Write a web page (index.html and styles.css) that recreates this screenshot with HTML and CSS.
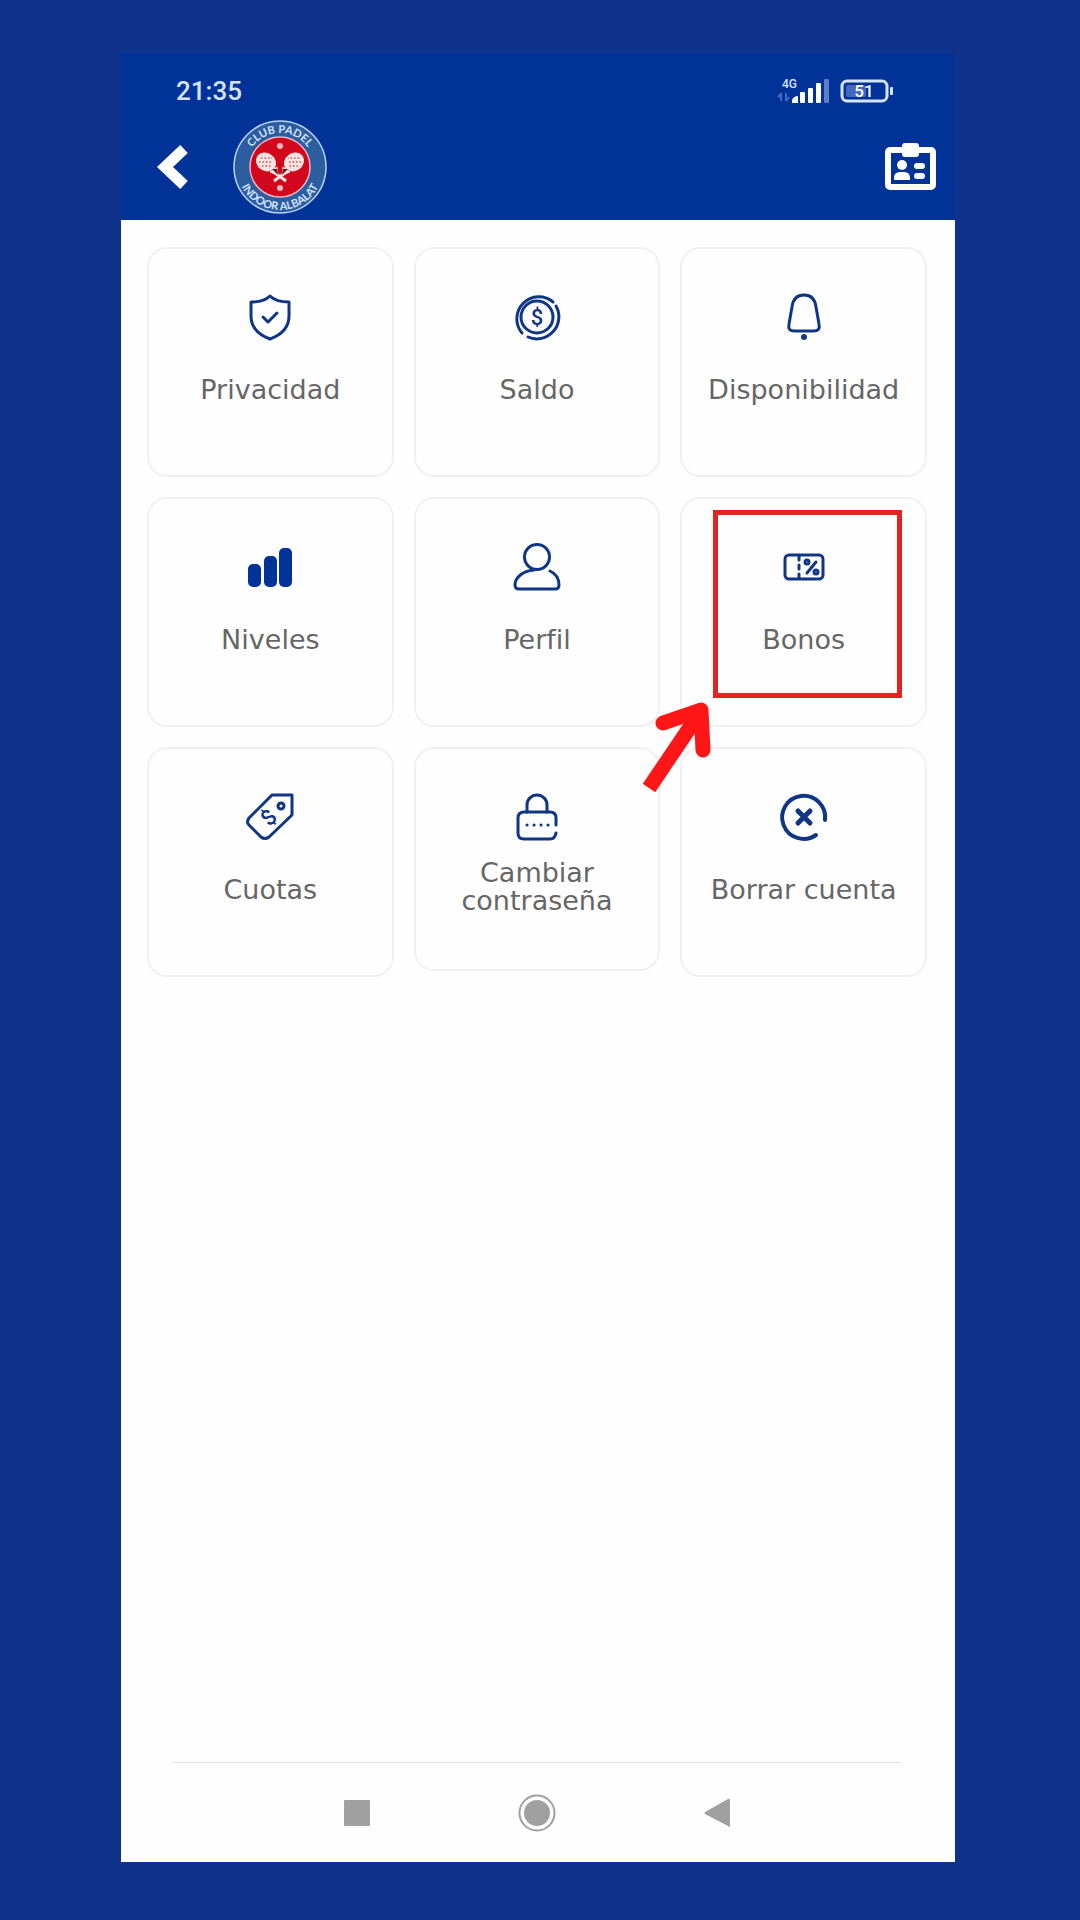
FILE: index.html
```html
<!DOCTYPE html>
<html lang="es">
<head>
<meta charset="utf-8">
<meta name="viewport" content="width=device-width, initial-scale=1">
<title>Club Padel Indoor Albalat</title>
<link rel="stylesheet" href="styles.css">
</head>

<body>
<div class="phone">
    <header class="header">
        <div class="status">
            <span class="time">21:35</span>
            <svg class="signal" width="54" height="28" viewBox="0 0 54 28">
                <text x="6" y="11" class="net">4G</text>
                <path d="M5 16v8M2 20l3-3M10 24v-8M10 24l3-4" fill="none" stroke="#4468bd" stroke-width="2"/>
                <path d="M16 26v-3q2-4 6-4v7z" fill="#fff"/>
                <rect x="24" y="15" width="5" height="11" rx="1" fill="#fff"/>
                <rect x="32" y="11" width="5" height="15" rx="1" fill="#fff"/>
                <rect x="40" y="6" width="5" height="20" rx="1" fill="#fff"/>
                <rect x="48" y="2" width="5" height="24" rx="1" fill="#5b7dcb"/>
            </svg>
            <svg class="battery" width="54" height="24" viewBox="0 0 54 24">
                <rect x="2" y="2" width="45" height="20" rx="5" fill="none" stroke="#d5e4ff" stroke-width="3"/>
                <rect x="6" y="6" width="20" height="12" rx="2" fill="#4468bd"/>
                <rect x="50" y="8" width="3" height="8" rx="1" fill="#d5e4ff"/>
                <text x="24" y="18" text-anchor="middle" class="charge">51</text>
            </svg>
        </div>
        <div class="bar">
            <a href="#" class="back" aria-label="Volver">
                <svg width="32" height="46" viewBox="0 0 32 46"><path d="M27 5L8 23l19 18" fill="none" stroke="#fff" stroke-width="11"/></svg>
            </a>
            <svg class="logo" width="94" height="94" viewBox="0 0 94 94">
                <defs>
                    <path id="arcTop" d="M13 47a34 34 0 0 1 68 0"/>
                    <path id="arcBottom" d="M4 47a43 43 0 0 0 86 0"/>
                </defs>
                <circle cx="47" cy="47" r="46" fill="#2b5d9f" stroke="#b9d3f5" stroke-width="1.5"/>
                <circle cx="47" cy="47" r="30" fill="#d2061c" stroke="#f0b4c4" stroke-width="1.5"/>
                <text class="logo-text"><textPath href="#arcTop" startOffset="50%" text-anchor="middle">CLUB PADEL</textPath></text>
                <text class="logo-text"><textPath href="#arcBottom" startOffset="50%" text-anchor="middle">INDOOR ALBALAT</textPath></text>
                <g id="racket" stroke="#fbe3e0" fill="none">
                    <path d="M42 53l11 8" stroke-width="3"/>
                    <ellipse cx="33" cy="42" rx="10" ry="8.5" transform="rotate(35 33 42)" fill="#fbe3e0"/>
                    <path d="M37 52l7 3 0-8z" fill="#fbe3e0"/>
                    <path d="M28 38h11M26 42h14M29 46h10" stroke="#c9505a" stroke-width="1.5" stroke-dasharray="1.5 2"/>
                    <path d="M39 49l6 6-1-6z" fill="#5b2420" stroke="none"/>
                </g>
                <use href="#racket" transform="matrix(-1 0 0 1 94 0)"/>
                <circle cx="47" cy="26" r="3" fill="#fbb8b8"/>
                <circle cx="47" cy="68" r="3" fill="#fbb8b8"/>
            </svg>
            <a href="#" class="card-id" aria-label="Carnet">
                <svg width="52" height="48" viewBox="0 0 52 48">
                    <rect x="4" y="7" width="45" height="37" rx="2" fill="none" stroke="#fff" stroke-width="6"/>
                    <rect x="18" y="0" width="17" height="14" rx="3" fill="#fff"/>
                    <circle cx="18" cy="22" r="5" fill="#fff"/>
                    <path d="M10 37v-2q0-6 6-6h4q6 0 6 6v2z" fill="#fff"/>
                    <rect x="30" y="20" width="11" height="6" rx="3" fill="#fff"/>
                    <rect x="30" y="30" width="11" height="6" rx="3" fill="#fff"/>
                </svg>
            </a>
        </div>
    </header>

    <main class="tiles">
        <a href="#" class="tile">
            <svg class="icon" viewBox="0 0 46 46"><path d="M23 2q-6 6-19 6v14q0 16 19 23q19-7 19-23V8q-13 0-19-6z"/><path d="M16 23l5 5 9-9"/></svg>
            <span class="label">Privacidad</span>
        </a>
        <a href="#" class="tile">
            <svg class="icon" viewBox="0 0 46 46">
                <circle cx="23" cy="23" r="16"/>
                <path d="M39 8A22 22 0 0 0 8 39"/><path d="M42 12A22 22 0 0 1 14 43"/>
                <text x="23" y="31" text-anchor="middle" class="money">$</text>
            </svg>
            <span class="label">Saldo</span>
        </a>
        <a href="#" class="tile">
            <svg class="icon" viewBox="0 0 46 46"><path d="M23 1c-7 0-11 4-12 12L8 30c-1 5 1 7 5 7h20c4 0 6-2 5-7l-3-17c-1-8-5-12-12-12z"/><circle cx="23" cy="43" r="3" class="solid"/></svg>
            <span class="label">Disponibilidad</span>
        </a>
        <a href="#" class="tile">
            <svg class="icon level" viewBox="0 0 46 46"><rect x="1" y="20" width="13" height="23" rx="5"/><rect x="17" y="12" width="13" height="31" rx="5"/><rect x="32" y="4" width="13" height="39" rx="5"/></svg>
            <span class="label">Niveles</span>
        </a>
        <a href="#" class="tile">
            <svg class="icon" viewBox="0 0 46 46"><circle cx="23" cy="13" r="12.500"/><path d="M20 26C8 27 1 34 1 41q0 4 4 4h36q4 0 4-4 0-10-9-14"/></svg>
            <span class="label">Perfil</span>
        </a>
        <a href="#" class="tile">
            <svg class="icon" viewBox="0 0 46 46"><rect x="4" y="11" width="38" height="24" rx="4"/><path d="M18 12v4M18 21v4M18 30v4M26 29l9-11"/><circle cx="26" cy="18" r="2"/><circle cx="35" cy="28" r="2"/></svg>
            <span class="label">Bonos</span>
            <span class="mark"></span>
            <svg class="arrow" width="70" height="91" viewBox="0 0 70 91">
                <path d="M59 9L7 86" stroke-width="15"/>
                <path d="M21 21L59 8l2 40" stroke-width="15" stroke-linecap="round" stroke-linejoin="round"/>
            </svg>
        </a>
        <a href="#" class="tile">
            <svg class="icon" viewBox="0 0 46 46">
                <path d="M25 1h20v20L22 43q-4 3-8 0L2 31q-3-3 0-7z"/><circle cx="34" cy="12" r="3"/>
                <text x="0" y="7" text-anchor="middle" class="money" transform="translate(22 24) rotate(-45)">$</text>
            </svg>
            <span class="label">Cuotas</span>
        </a>
        <a href="#" class="tile">
            <svg class="icon" viewBox="0 0 46 46"><path d="M13 18v-7a10 10 0 0 1 20 0v7"/><path d="M42 31v-7q0-6-6-6H10q-6 0-6 6v15q0 6 6 6h26q5 0 6-6"/><path d="M13 31h.1M20 31h.1M27 31h.1M34 31h.1"/></svg>
            <span class="label two">Cambiar contraseña</span>
        </a>
        <a href="#" class="tile">
            <svg class="icon bold" viewBox="0 0 46 46"><path d="M44 26A21.500 21.500 0 1 0 35 41"/><path d="M17 17l12 12M29 17L17 29" stroke-width="5"/></svg>
            <span class="label">Borrar cuenta</span>
        </a>
    </main>

    <nav class="keys">
        <button type="button" aria-label="Recientes"><svg width="26" height="38" viewBox="0 0 26 38"><rect y="6" width="26" height="26" rx="1"/></svg></button>
        <button type="button" aria-label="Inicio"><svg width="38" height="38" viewBox="0 0 38 38"><circle cx="19" cy="19" r="17.500" class="ring"/><circle cx="19" cy="19" r="13"/></svg></button>
        <button type="button" aria-label="Atrás"><svg width="26" height="38" viewBox="0 0 26 38"><path d="M26 6v26q0 2-2 0L1 20q-1-1 0-2L24 5q2-1 2 1z"/></svg></button>
    </nav>
</div>
</body>
</html>
```

FILE: styles.css
```css
*{margin:0;padding:0;box-sizing:border-box;}
body{display:flex;min-height:100vh;padding:53px 125px 58px 121px;background:#0f338a;font-family:"DejaVu Sans",Arial,sans-serif;}
a{color:inherit;text-decoration:none;}
svg{display:block;}

.phone{display:flex;flex:1;flex-direction:column;min-width:0;background:#fefefe;}

.header{padding:0 19px 6px 36px;background:#003298;color:#d5e4ff;}
.status{display:flex;align-items:center;height:67px;padding:9px 42px 0 19px;}
.time{margin-right:auto;font:500 26px/30px Roboto,sans-serif;}
.signal{margin-right:10px;}
.net{font:500 12px Roboto,sans-serif;fill:#d5e4ff;}
.charge{font:500 17px Roboto,sans-serif;fill:#fff;}
.bar{display:flex;align-items:center;}
.logo{margin-left:44px;margin-right:auto;}
.logo-text{font:700 11px Lato,sans-serif;fill:#d5e4ff;}

.tiles{display:grid;grid-template-columns:repeat(3,1fr);gap:20px;align-items:start;padding:27px 28px 27px 26px;}
.tile{position:relative;display:flex;flex-direction:column;align-items:center;padding:45px 8px 54px;border:2px solid #f1f1f1;border-radius:20px;color:#666;}
.icon{width:46px;height:46px;overflow:visible;fill:none;stroke:#0f3684;stroke-width:3;stroke-linecap:round;stroke-linejoin:round;}
.level{fill:#003298;stroke:none;}
.bold{stroke-width:4;}
.solid{fill:#0f3684;stroke:none;}
.money{font:500 22px Roboto,sans-serif;fill:#0f3684;stroke:none;}
.label{display:flex;align-items:center;min-height:62px;margin-top:19px;font-size:27px;line-height:28px;text-align:center;}
.two{min-height:56px;}

.mark{position:absolute;top:11px;right:23px;bottom:27px;left:31px;border:5px solid #e32322;}
.arrow{position:absolute;top:203px;left:-40px;z-index:1;fill:none;stroke:#ff1616;}

.keys{display:flex;justify-content:center;align-items:center;gap:148px;height:100px;margin:auto 54px 0 51px;border-top:1px solid #e2e2e2;}
.keys button{border:0;background:none;}
.keys svg{fill:#a0a0a0;}
.keys .ring{fill:none;stroke:#a0a0a0;stroke-width:2;}
```
